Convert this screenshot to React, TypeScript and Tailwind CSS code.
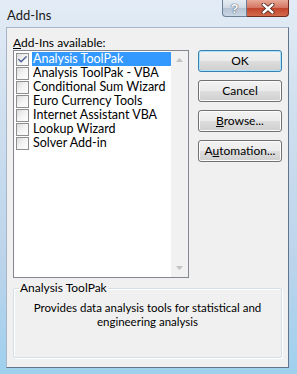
import { Check } from "lucide-react";

const items = [
  { name: "Analysis ToolPak", checked: true },
  { name: "Analysis ToolPak - VBA", checked: false },
  { name: "Conditional Sum Wizard", checked: false },
  { name: "Euro Currency Tools", checked: false },
  { name: "Internet Assistant VBA", checked: false },
  { name: "Lookup Wizard", checked: false },
  { name: "Solver Add-in", checked: false },
];

function CheckBox({ checked }: { checked: boolean }) {
  return (
    <span className="grid h-[13px] w-[13px] shrink-0 place-items-center border border-[#8e8f8f] bg-gradient-to-br from-[#dcdcdc] via-[#f4f4f4] to-[#fdfdfd]">
      {checked && <Check size={11} strokeWidth={3} className="text-[#4a5f97]" />}
    </span>
  );
}

function DialogButton({ children, primary }: { children: React.ReactNode; primary?: boolean }) {
  return (
    <button
      type="button"
      className={
        "h-[22px] w-[84px] rounded-[3px] border bg-[linear-gradient(#f2f2f2_0%,#ebebeb_48%,#dddddd_52%,#cfcfcf_100%)] text-[12px] leading-[14px] text-black " +
        (primary ? "border-[#3c7fb1] shadow-[inset_0_0_0_1px_#a7e3fb]" : "border-[#707070] shadow-[inset_0_0_0_1px_#fcfcfc]")
      }
    >
      {children}
    </button>
  );
}

export default function App() {
  return (
    <div className="flex h-[374px] w-[297px] flex-col bg-[linear-gradient(180deg,#e3ecf6_0%,#cfdfef_30%,#bcd4eb_70%,#9fd0ee_100%)] font-['Lato',sans-serif] text-[12px] leading-[14px] text-black">
      <div className="flex h-[27px] shrink-0 items-start">
        <span className="pl-[7px] pt-[7px] text-[13px] leading-[16px] text-[#1a1a1a]">Add-Ins</span>
        <div className="ml-auto mr-[8px] flex shrink-0">
          <div className="grid h-[17px] w-[25px] shrink-0 place-items-center rounded-bl-[4px] border border-t-0 border-[#6b7f96] bg-[linear-gradient(#e6ecf2_0%,#cfd9e4_50%,#b5c3d3_51%,#c9d6e3_100%)] font-['Liberation_Sans',sans-serif] text-[13px] font-bold leading-none text-white [text-shadow:0_0_1px_#33475e,0_0_1px_#33475e]">
            ?
          </div>
          <div className="grid h-[17px] w-[42px] shrink-0 place-items-center rounded-br-[4px] border border-l-0 border-t-0 border-[#6e2b1f] bg-[linear-gradient(#e9a99a_0%,#d3735f_50%,#c1432b_51%,#d46a4b_100%)]">
            <svg width="14" height="11" viewBox="0 0 14 11">
              <path d="M2.5 1.5 L11.5 9.5 M11.5 1.5 L2.5 9.5" stroke="#3a1a14" strokeWidth="3.8" strokeLinecap="round" />
              <path d="M2.5 1.5 L11.5 9.5 M11.5 1.5 L2.5 9.5" stroke="#ffffff" strokeWidth="2.4" strokeLinecap="round" />
            </svg>
          </div>
        </div>
      </div>

      <div className="ml-[6px] mr-[8px] flex h-[341px] flex-col border border-l-[#a6b5c7] border-t-[#a6b5c7] border-r-[#61758d] border-b-[#61758d] bg-[#f0f0f0] pl-[6px] pt-[8px]">
        <div className="h-[14px] leading-[14px]">
          <span className="underline">A</span>dd-Ins available:
        </div>

        <div className="flex">
          <div className="flex h-[228px] w-[176px] border border-[#828790] bg-white">
            <div className="flex flex-1 flex-col pl-[2px] pt-[1px]">
              {items.map((item) => (
                <div key={item.name} className="flex h-[14px] items-center gap-[3px]">
                  <CheckBox checked={item.checked} />
                  <span
                    className={
                      "h-[14px] flex-1 whitespace-nowrap pl-[1px] text-[12.5px] leading-[14px] " +
                      (item.checked ? "bg-[#3399ff] text-white" : "")
                    }
                  >
                    {item.name}
                  </span>
                </div>
              ))}
            </div>
            <div className="flex w-[17px] flex-col items-center justify-between bg-[#f1f1f1] py-[7px]">
              <svg width="7" height="4" viewBox="0 0 7 4">
                <path d="M0 4 L3.5 0 L7 4 Z" fill="#c2c2c2" />
              </svg>
              <svg width="7" height="4" viewBox="0 0 7 4">
                <path d="M0 0 L3.5 4 L7 0 Z" fill="#c2c2c2" />
              </svg>
            </div>
          </div>

          <div className="ml-[9px] flex flex-col gap-[8px]">
            <DialogButton primary>OK</DialogButton>
            <DialogButton>Cancel</DialogButton>
            <DialogButton>
              <span className="underline">B</span>rowse...
            </DialogButton>
            <DialogButton>
              A<span className="underline">u</span>tomation...
            </DialogButton>
          </div>
        </div>

        <fieldset className="mt-[3px] h-[77px] w-[269px] rounded-[2px] border border-[#d5dfe5] px-[4px] shadow-[1px_1px_0_#ffffff,inset_1px_1px_0_#ffffff]">
          <legend className="ml-[1px] px-[1px] leading-[14px]">Analysis ToolPak</legend>
          <p className="mt-[6px] text-center text-[11.5px] leading-[14px]">
            Provides data analysis tools for statistical and
            <br />
            engineering analysis
          </p>
        </fieldset>
      </div>
    </div>
  );
}
